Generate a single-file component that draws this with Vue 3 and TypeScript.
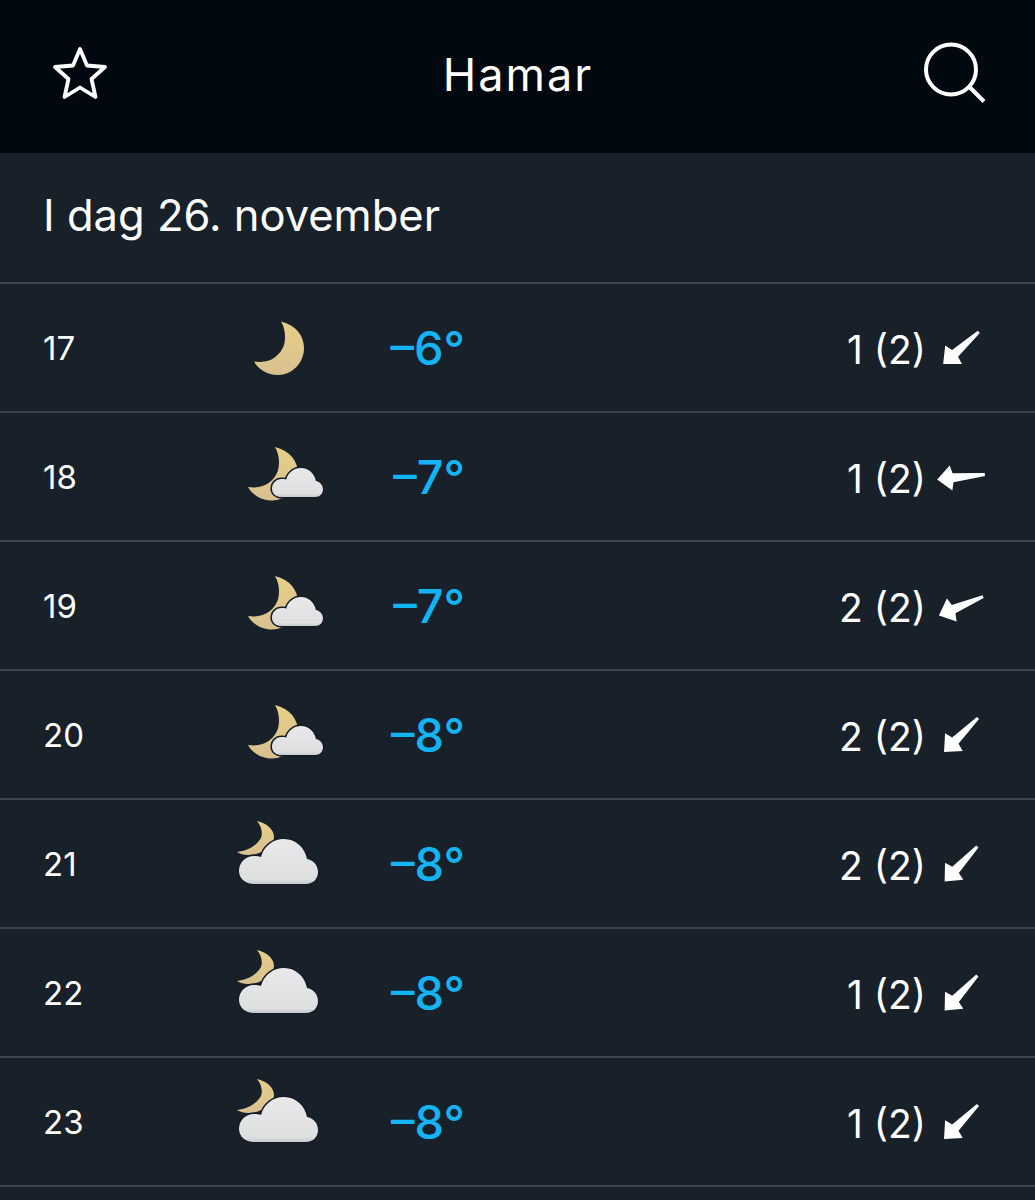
<script setup lang="ts">
type Sky = "moon" | "moonCloudSmall" | "moonCloudBig";

interface HourRow {
  hour: string;
  sky: Sky;
  temp: string;
  wind: string;
  angle: number;
}

const rows: HourRow[] = [
  { hour: "17", sky: "moon", temp: "–6°", wind: "1 (2)", angle: -42 },
  { hour: "18", sky: "moonCloudSmall", temp: "–7°", wind: "1 (2)", angle: -6 },
  { hour: "19", sky: "moonCloudSmall", temp: "–7°", wind: "2 (2)", angle: -23 },
  { hour: "20", sky: "moonCloudSmall", temp: "–8°", wind: "2 (2)", angle: -45 },
  { hour: "21", sky: "moonCloudBig", temp: "–8°", wind: "2 (2)", angle: -47 },
  { hour: "22", sky: "moonCloudBig", temp: "–8°", wind: "1 (2)", angle: -47 },
  { hour: "23", sky: "moonCloudBig", temp: "–8°", wind: "1 (2)", angle: -45 },
];

const moon =
  "M51 23.5C66 27 74 38 74 50C74 65 62 77 48 77C37 77 28 71 24 63.5C40 66 50 58 54 47C56 39 55 30 51 23.5Z";
const thinMoon =
  "M27 7C36 9 44 15 44 23C44 33 30 41 18 41C14 41 10 40 7 38C18 37 27 31 31 24C33 18 31 12 27 7Z";
const cloud =
  "M24 70C15 70 9 64 9 57C9 49 15 42 24 42C27 42 29 42 31 43C34 32 43 25 54 25C66 25 75 34 77 45C83 46 88 51 88 58C88 65 83 70 76 70Z";
</script>

<template>
  <div class="page">
    <header class="top">
      <svg class="star" viewBox="0 0 60 60">
        <path
          d="M30 5L37 21.500L55 23L41.500 35L45.500 53L30 43.500L14.500 53L18.500 35L5 23L23 21.500Z"
          fill="none"
          stroke="#fff"
          stroke-width="3.8"
          stroke-linejoin="round"
        />
      </svg>
      <h1 class="place">Hamar</h1>
      <svg class="search" viewBox="0 0 70 70">
        <circle cx="31" cy="30.500" r="25" fill="none" stroke="#fff" stroke-width="4" />
        <path d="M50 48.500L64 62.500" stroke="#fff" stroke-width="4" />
      </svg>
    </header>

    <div class="day">I dag 26. november</div>

    <div v-for="row in rows" :key="row.hour" class="row">
      <span class="hour">{{ row.hour }}</span>
      <svg class="sky" viewBox="0 0 100 100">
        <defs>
          <linearGradient :id="'moon' + row.hour" x1="0" y1="0" x2="0" y2="1">
            <stop offset="0" stop-color="#e8cf86" />
            <stop offset="1" stop-color="#d8c090" />
          </linearGradient>
          <linearGradient :id="'cloud' + row.hour" x1="0" y1="0" x2="0" y2="1">
            <stop offset="0" stop-color="#e9e9ea" />
            <stop offset="0.9" stop-color="#dedfe1" />
            <stop offset="1" stop-color="#c6c7ca" />
          </linearGradient>
        </defs>
        <path v-if="row.sky === 'moon'" :d="moon" :fill="`url(#moon${row.hour})`" />
        <template v-else-if="row.sky === 'moonCloudSmall'">
          <path :d="moon" transform="translate(-6 -3.5)" :fill="`url(#moon${row.hour})`" />
          <path
            :d="cloud"
            transform="translate(36.200 24.900) scale(0.645)"
            :fill="`url(#cloud${row.hour})`"
            stroke="#161d26"
            stroke-width="5"
            paint-order="stroke"
          />
        </template>
        <template v-else>
          <path :d="thinMoon" :fill="`url(#moon${row.hour})`" />
          <path
            :d="cloud"
            :fill="`url(#cloud${row.hour})`"
            stroke="#161d26"
            stroke-width="3"
            paint-order="stroke"
          />
        </template>
      </svg>
      <span class="temp">{{ row.temp }}</span>
      <div class="wind">
        <span class="speed">{{ row.wind }}</span>
        <svg class="arrow" viewBox="-28 -28 56 56">
          <path
            d="M-24 0L-10 -12.500L-8 -4.500L24 -1.500L24 1.500L-8 4.500L-10 12.500Z"
            fill="#fff"
            :transform="`rotate(${row.angle})`"
          />
        </svg>
      </div>
    </div>
  </div>
</template>

<style>
html,
body {
  background: #18202a;
}
</style>

<style scoped>
.page {
  width: 1035px;
  height: 1200px;
  overflow: hidden;
  background: #18202a;
  color: #fff;
  font-family: Inter, "Liberation Sans", sans-serif;
}
.top {
  height: 153px;
  background: #02080f;
  display: grid;
  grid-template-columns: 1fr auto 1fr;
  align-items: center;
  padding: 0 45px 6px 50px;
  box-sizing: border-box;
}
.star {
  width: 60px;
  height: 60px;
}
.search {
  width: 70px;
  height: 70px;
  justify-self: end;
}
.place {
  margin: 2px 4px 0 0;
  font-size: 45px;
  font-weight: 400;
  letter-spacing: 2px;
}
.day {
  height: 131px;
  box-sizing: border-box;
  border-bottom: 2px solid #3a4552;
  padding: 0 0 6px 43px;
  display: flex;
  align-items: center;
  font-size: 43.5px;
}
.row {
  height: 129px;
  box-sizing: border-box;
  border-bottom: 2px solid #3a4552;
  padding: 0 46px 0 43px;
  display: grid;
  grid-template-columns: 187px 100px 135px 1fr;
  align-items: center;
}
.hour {
  font-size: 33px;
}
.sky {
  width: 100px;
  height: 100px;
}
.temp {
  font-size: 47px;
  font-weight: 500;
  color: #12b4f4;
  text-align: right;
}
.wind {
  display: flex;
  justify-content: flex-end;
  align-items: center;
  gap: 7px;
}
.speed {
  font-size: 39px;
  padding-top: 3px;
}
.arrow {
  width: 56px;
  height: 56px;
}
</style>
